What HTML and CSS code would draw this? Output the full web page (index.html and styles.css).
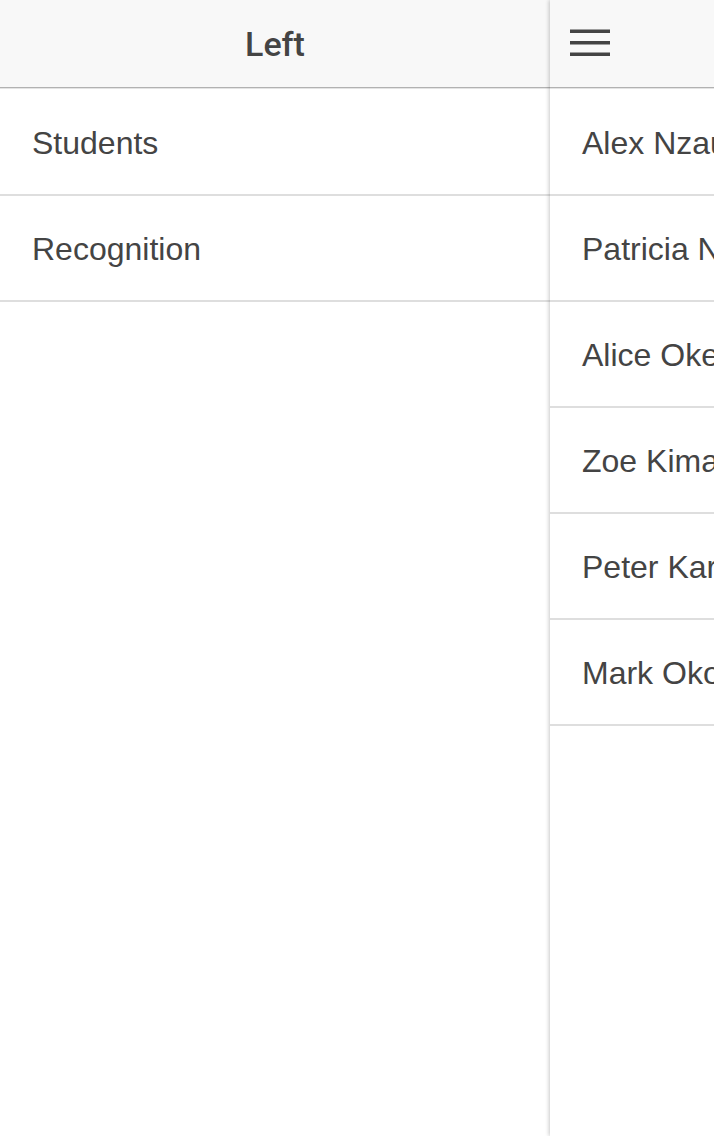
FILE: index.html
```html
<!DOCTYPE html>
<html>
<head>
<meta charset="utf-8">
<link rel="stylesheet" href="styles.css">
</head>
<body>
<div class="app">
  <aside class="menu">
    <header class="bar">
      <h1 class="title">Left</h1>
    </header>
    <ul class="list">
      <li class="item">Students</li>
      <li class="item">Recognition</li>
    </ul>
  </aside>
  <main class="main">
    <header class="bar bar-main">
      <svg class="burger" width="40" height="30" viewBox="0 0 40 30">
        <rect x="0" y="0.5" width="40" height="3.5" fill="#444"/>
        <rect x="0" y="12" width="40" height="3.5" fill="#444"/>
        <rect x="0" y="23.5" width="40" height="3.5" fill="#444"/>
      </svg>
    </header>
    <ul class="list">
      <li class="item">Alex Nzau</li>
      <li class="item">Patricia Njeri</li>
      <li class="item">Alice Okello</li>
      <li class="item">Zoe Kimani</li>
      <li class="item">Peter Kariuki</li>
      <li class="item">Mark Okoth</li>
    </ul>
  </main>
</div>
</body>
</html>
```

FILE: styles.css
```css
html, body {
  margin: 0;
  padding: 0;
  background: #fff;
  font-family: "Liberation Sans", Arial, sans-serif;
  color: #444;
}
.app {
  display: flex;
  width: 714px;
  height: 1136px;
  overflow: hidden;
}
.menu {
  width: 550px;
  flex: 0 0 550px;
  background: #fff;
}
.main {
  flex: 1;
  min-width: 0;
  overflow: hidden;
  background: #fff;
  position: relative;
  z-index: 1;
  box-shadow: -1px 0 4px rgba(0, 0, 0, 0.22);
}
.bar {
  height: 87px;
  background: #f8f8f8;
  border-bottom: 1px solid #b2b2b2;
  box-shadow: 0 1px 0 #e4e4e4;
  display: flex;
  align-items: center;
  justify-content: center;
}
.bar-main {
  justify-content: flex-start;
  padding-left: 20px;
}
.burger {
  display: block;
}
.title {
  margin: 0;
  font-family: Roboto, "Liberation Sans", sans-serif;
  font-size: 34px;
  font-weight: 500;
  color: #444;
}
.list {
  list-style: none;
  margin: 0;
  padding: 0;
  padding-top: 2px;
}
.item {
  height: 101px;
  padding-top: 3px;
  display: flex;
  align-items: center;
  padding-left: 32px;
  font-size: 32px;
  white-space: nowrap;
  border-bottom: 2px solid #dedede;
}
```
